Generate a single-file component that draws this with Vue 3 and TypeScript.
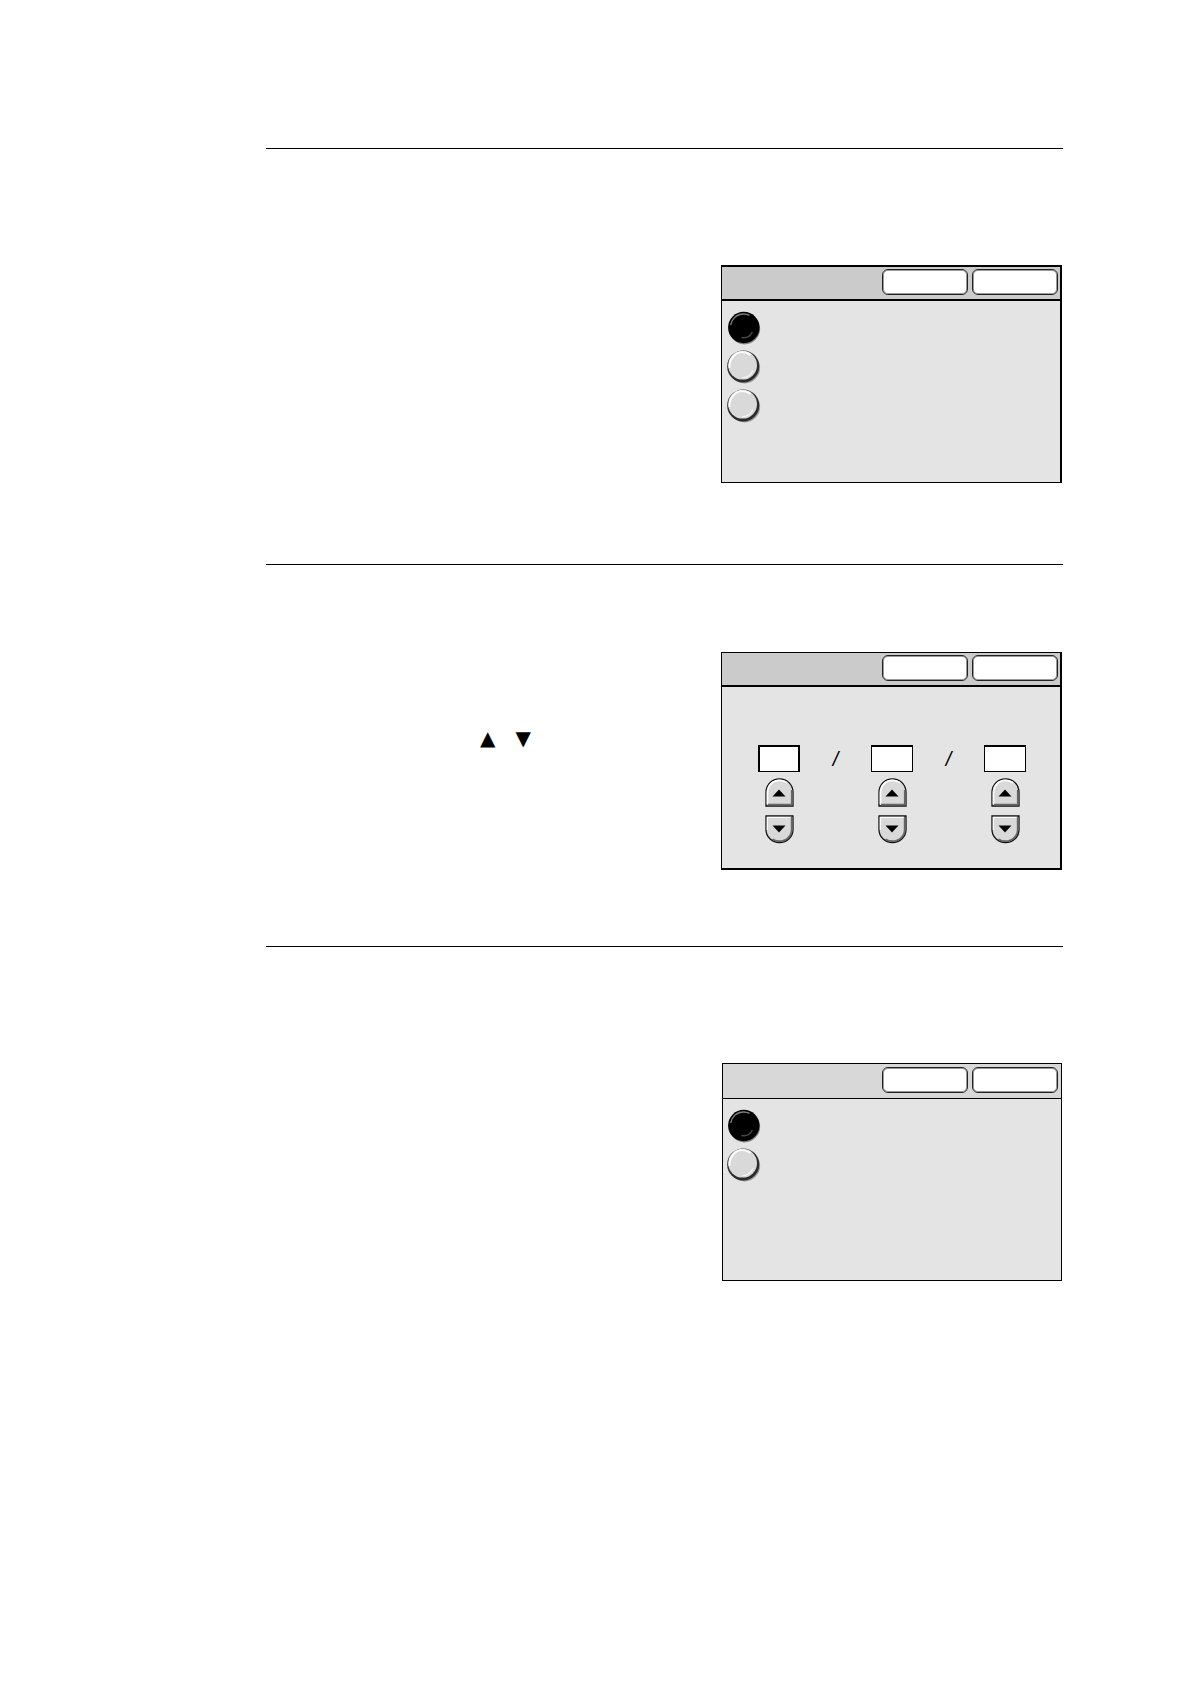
<script setup lang="ts">
import { ref } from 'vue'

interface Panel {
  id: string
  kind: 'choices' | 'date'
  choices: number
}

const panels: Panel[] = [
  { id: 'first', kind: 'choices', choices: 3 },
  { id: 'second', kind: 'date', choices: 0 },
  { id: 'third', kind: 'choices', choices: 2 },
]

const selected = ref<Record<string, number>>({ first: 1, third: 1 })
const dateParts = ['Date part 1', 'Date part 2', 'Date part 3']
</script>

<template>
  <main class="page">
    <section v-for="panel in panels" :key="panel.id" class="section" :class="panel.id">
      <div class="notes">
        <p v-if="panel.kind === 'date'" class="arrows"><span>▲</span><span>▼</span></p>
      </div>

      <div class="panel">
        <header class="bar">
          <button type="button" class="action" aria-label="Cancel"></button>
          <button type="button" class="action" aria-label="Save"></button>
        </header>

        <div v-if="panel.kind === 'choices'" class="choices">
          <label v-for="n in panel.choices" :key="n" class="choice">
            <input
              v-model="selected[panel.id]"
              type="radio"
              :name="panel.id"
              :value="n"
              :aria-label="`Option ${n}`"
            />
            <svg v-if="selected[panel.id] === n" viewBox="0 0 34 34" aria-hidden="true">
              <circle cx="17.5" cy="17.8" r="15.6" fill="#858585" />
              <circle cx="16.8" cy="16.5" r="15.7" fill="#000" />
              <path d="M3.600 14C5 7.500 10 3 16.500 3c2.500 0 4.500.5 6 1.400" fill="none" stroke="#7c7c7c" stroke-width="1.400" />
              <path d="M14.500 26.600c5 .7 9-1.600 10.800-5.600" fill="none" stroke="#484848" stroke-width="1.500" />
            </svg>
            <svg v-else viewBox="0 0 34 34" aria-hidden="true">
              <circle cx="17.5" cy="17.8" r="15.6" fill="#999" />
              <circle cx="16.2" cy="16.4" r="16" fill="#2b2b2b" />
              <circle cx="15.6" cy="15.2" r="14.4" fill="#d9d9d9" />
              <path d="M2.500 18C1.800 9.500 8 2.200 15.500 2.200c3.500 0 6 1.200 7.800 2.800" fill="none" stroke="#fff" stroke-width="1.800" />
              <path d="M15 27.500c5 .3 9-2.500 10.800-7" fill="none" stroke="#f4f4f4" stroke-width="1.200" />
            </svg>
          </label>
        </div>

        <div v-else class="date">
          <template v-for="(part, i) in dateParts" :key="part">
            <span v-if="i > 0" class="slash">/</span>
            <div class="part">
              <input type="text" class="field" :aria-label="part" />
              <button type="button" class="step" :aria-label="`${part} up`">
                <svg viewBox="0 0 29 29" aria-hidden="true">
                  <path d="M1 28V14.500C1 6.500 7 .8 14.500 .8S28 6.500 28 14.500V28Z" fill="#d9d9d9" stroke="#111" stroke-width="1.300" />
                  <path d="M2.500 26V14.500C2.500 7.500 8 2.300 14.500 2.300c3 0 5.500 1 7.500 2.500" fill="none" stroke="#fff" stroke-width="1.700" />
                  <path d="M3 26.600H26.800V12" fill="none" stroke="#666" stroke-width="1.800" />
                  <path d="M14 11.500 20.500 18.500H7.500Z" fill="#000" />
                </svg>
              </button>
              <button type="button" class="step" :aria-label="`${part} down`">
                <svg viewBox="0 0 29 29" aria-hidden="true">
                  <path d="M1 1V14.500C1 22 7 27.500 14.500 27.500S28 22 28 14.500V1Z" fill="#d9d9d9" stroke="#111" stroke-width="1.300" />
                  <path d="M2.400 15V2.400H26" fill="none" stroke="#fff" stroke-width="1.300" />
                  <path d="M26.700 2V14.500C26.700 21 21 26.200 14.500 26.200c-2.500 0-5-.7-7-2" fill="none" stroke="#666" stroke-width="1.800" />
                  <path d="M14 17.500 20.500 10.500H7.500Z" fill="#000" />
                </svg>
              </button>
            </div>
          </template>
        </div>
      </div>
    </section>
  </main>
</template>

<style>
body {
  margin: 0;
  background: #fff;
}
</style>

<style scoped>
* {
  box-sizing: border-box;
}

.page {
  min-height: 100vh;
  padding: 148px 127px 80px 266px;
  font-family: "Liberation Sans", Arial, sans-serif;
  color: #000;
}

.section {
  display: grid;
  grid-template-columns: 1fr 341px;
  align-items: start;
  border-top: 1px solid #000;
  padding: 116px 1px 81px 0;
}

.section.second {
  padding-top: 87px;
  padding-bottom: 76px;
}

.notes {
  padding: 74px 0 0 214px;
}

.arrows {
  display: flex;
  gap: 20px;
  margin: 0;
  font-family: "DejaVu Sans", sans-serif;
  font-size: 20px;
  line-height: 24px;
}

.panel {
  height: 218px;
  border: 1px solid #000;
  border-top-width: 2px;
  border-right-width: 2px;
  background: #e4e4e4;
}

.second .panel {
  border-top-width: 1px;
  border-bottom-width: 2px;
}

.third .panel {
  margin-left: 1px;
  border-width: 1px;
}

.bar {
  display: flex;
  justify-content: flex-end;
  gap: 4px;
  height: 34px;
  padding: 2px 2px 0;
  border-bottom: 2px solid #000;
  background: #cbcbcb;
}

.third .bar {
  height: 35px;
  padding: 3px 3px 0;
  border-bottom-width: 1px;
  background: #d8d8d8;
}

.action {
  width: 86px;
  height: 26px;
  padding: 0;
  border: 1px solid #222;
  border-radius: 6px;
  background: #fff;
  box-shadow: inset 0 0 0 1px #999;
}

.choices {
  display: flex;
  flex-direction: column;
  align-items: flex-start;
  gap: 5px;
  padding: 10px 5px;
}

.third .choices {
  padding: 10px 4px;
}

.choice {
  position: relative;
  width: 34px;
  height: 34px;
}

.choice input {
  position: absolute;
  inset: 0;
  width: 100%;
  height: 100%;
  margin: 0;
  opacity: 0;
}

.choice svg,
.step svg {
  display: block;
  width: 100%;
  height: 100%;
}

.date {
  display: flex;
  justify-content: space-between;
  padding: 58px 34px 0 36px;
}

.part {
  display: flex;
  flex-direction: column;
  align-items: center;
  width: 42px;
}

.field {
  width: 42px;
  height: 27px;
  margin-bottom: 6px;
  padding: 0;
  border: 1px solid #000;
  border-top-width: 2px;
  border-radius: 0;
  background: #fff;
  text-align: center;
  font: inherit;
}

.part:first-child .field {
  border-left-width: 2px;
  border-right-width: 2px;
}

.step {
  width: 29px;
  height: 29px;
  padding: 0;
  border: 0;
  background: none;
}

.step + .step {
  margin-top: 8px;
}

.slash {
  padding-top: 2px;
  font-size: 20px;
  font-style: italic;
  line-height: 24px;
}
</style>
